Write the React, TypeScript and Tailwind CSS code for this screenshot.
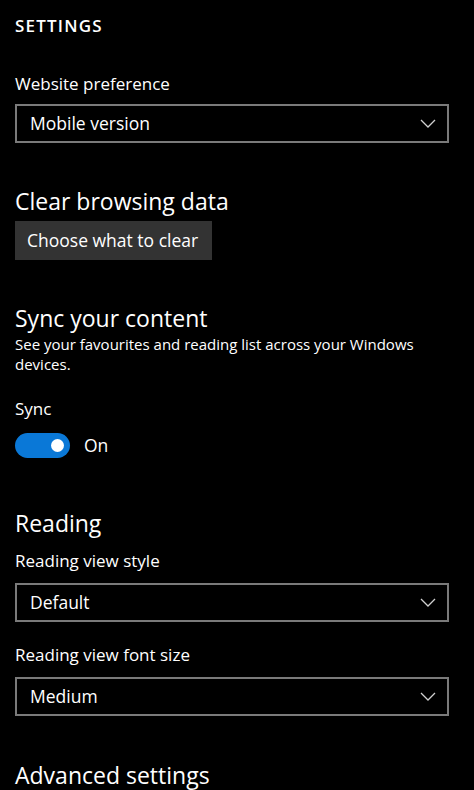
import React from "react";

const font = { fontFamily: '"Open Sans", "Noto Sans", sans-serif' };

function Chevron() {
  return (
    <svg width="16" height="9" viewBox="0 0 16 9" className="shrink-0">
      <path d="M1 1 L8 8 L15 1" fill="none" stroke="#d0d0d0" strokeWidth="1.3" />
    </svg>
  );
}

function Dropdown({ value }: { value: string }) {
  return (
    <div className="mr-[25px] flex h-[39px] items-center justify-between border-2 border-[#7a7a7a] pl-[13px] pr-[11px]">
      <span className="text-[17.5px] leading-none text-white">{value}</span>
      <Chevron />
    </div>
  );
}

export default function App() {
  return (
    <div className="h-[790px] w-[474px] overflow-hidden bg-black pl-[15px] text-white" style={font}>
      <div className="pt-[16px] text-[17px] font-semibold leading-[20px] tracking-[0.07em]">SETTINGS</div>

      <div className="mt-[38px] text-[17px] leading-[20px]">Website preference</div>
      <div className="mt-[10px]">
        <Dropdown value="Mobile version" />
      </div>

      <div className="mt-[44px] text-[23px] leading-[28px]">Clear browsing data</div>
      <div className="mt-[6px] flex h-[39px] w-[197px] items-center bg-[#333333] pl-[12px] text-[17.5px]">
        Choose what to clear
      </div>

      <div className="mt-[44px] text-[23px] leading-[28px]">Sync your content</div>
      <div className="mt-[2px] text-[15px] leading-[20px]">
        See your favourites and reading list across your Windows
        <br />
        devices.
      </div>
      <div className="mt-[25px] text-[17px] leading-[20px]">Sync</div>
      <div className="mt-[14px] flex items-center">
        <div className="flex h-[25px] w-[55px] items-center justify-end rounded-full bg-[#0a78d7] pr-[6px]">
          <div className="h-[13px] w-[13px] rounded-full bg-white" />
        </div>
        <span className="ml-[14px] text-[17.5px] leading-none">On</span>
      </div>

      <div className="mt-[51px] text-[23px] leading-[28px]">Reading</div>
      <div className="mt-[14px] text-[17px] leading-[20px]">Reading view style</div>
      <div className="mt-[12px]">
        <Dropdown value="Default" />
      </div>
      <div className="mt-[23px] text-[17px] leading-[20px]">Reading view font size</div>
      <div className="mt-[12px]">
        <Dropdown value="Medium" />
      </div>

      <div className="mt-[45px] text-[23px] leading-[28px]">Advanced settings</div>
    </div>
  );
}
